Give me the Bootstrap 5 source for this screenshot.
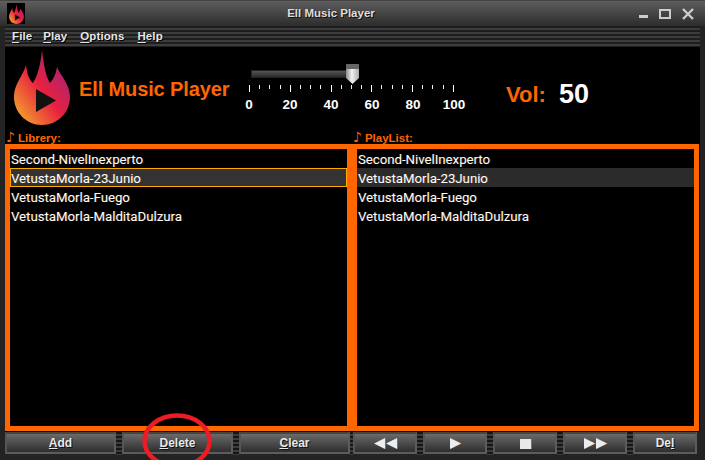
<!DOCTYPE html>
<html lang="en">
<head>
    <meta charset="UTF-8">
    <meta name="viewport" content="width=device-width, initial-scale=1.0">
    <title>Ell Music Player</title>
    <link href="https://cdn.jsdelivr.net/npm/bootstrap@5.3.0/dist/css/bootstrap.min.css" rel="stylesheet">
    <style>
        html, body { margin: 0; height: 460px; overflow: hidden; background: #fff; }
        .player-win { position: relative; width: 705px; height: 460px; overflow: hidden; background: #232323; font-family: "Liberation Sans", Arial, sans-serif; }
        .title-strip { height: 26px; background: linear-gradient(#5e5e5e, #2c2c2c); border-top: 1px solid #444; color: #ddd; font-size: 11.5px; font-weight: 700; text-shadow: 1px 1px 0 #111; }
        .title-icon { width: 18px; height: 21px; margin-left: 7px; background: #000; }
        .title-name { width: 612px; text-align: center; }
        .win-btns { gap: 11px; margin-left: 2px; }
        .menu-strip { height: 21px; margin: 0 5px; background: repeating-linear-gradient(#1d1d1d 0 2px, #3c3c3c 2px 4px); font-size: 11.5px; font-weight: 700; letter-spacing: .1px; }
        .menu-strip .nav-link { padding: 0; color: #e6e6e6; text-shadow: 1px 1px 0 #000; }
        .menu-strip u { text-underline-offset: 2px; }
        .player-body { margin: 0 5px; height: 385px; background: #000; }
        .head-row { height: 83px; }
        .logo-svg { width: 56px; height: 75px; margin: 3px 0 0 9px; }
        .app-name { color: #f60; font-size: 20px; font-weight: 700; letter-spacing: -.12px; margin: 27px 0 0 9px; width: 160px; white-space: nowrap; }
        .vol-box { width: 205px; margin: 17px 0 0 10px; position: relative; }
        .vol-track { width: 98px; height: 8px; margin-left: 2px; margin-top: 6px; background: linear-gradient(#555, #2a2a2a); border: 1px solid #222; }
        .vol-thumb { position: absolute; left: 97px; top: 0; width: 13px; height: 20px; }
        .tick-row { margin-top: 7px; height: 7px; }
        .tick-row span { display: block; width: 1px; height: 4px; background: #eee; }
        .tick-row span.big { height: 7px; background: #fff; }
        .num-row { margin-top: 3px; }
        .num-row span { width: 0; display: flex; justify-content: center; color: #fff; font-size: 13.5px; font-weight: 700; }
        .vol-word { color: #f60; font-size: 22px; font-weight: 700; margin: 31px 0 0 52px; }
        .vol-num { color: #fff; font-size: 27px; font-weight: 700; margin: 31px 0 0 13px; line-height: 1.2; }
        .label-row { height: 14px; color: #f60; font-size: 11.5px; font-weight: 700; line-height: 14px; }
        .label-row > div { width: 347px; padding-left: 1px; }
        .note-mark { font-family: "DejaVu Sans", sans-serif; font-size: 14px; font-weight: 700; line-height: 1; margin-right: 3px; }
        .song-box { width: 347px; height: 287px; border: 5px solid #f60; background: #000; }
        .song-box .list-group-item { height: 19px; padding: 0 0 0 1px; border: 0; border-radius: 0; background: transparent; color: #fff; font-family: Roboto, sans-serif; font-size: 13.2px; line-height: 21px; white-space: nowrap; text-shadow: 1px 0 0 rgba(190, 110, 50, .35); }
        .song-box .list-group-item.picked { background: #333; outline: 1px solid #fa0; outline-offset: -1px; }
        .song-box .list-group-item.hovered { background: #2b2b2b; }
        .btn-row { height: 24px; margin-left: 5px; }
        .btn-row .btn { height: 22px; padding: 1px 0 0; border: 2px solid #5c5c5c; border-top-color: #444; border-left-color: #555; border-radius: 0; background: linear-gradient(#6a6a6a, #2e2e2e); color: #e8e8e8; font-size: 12px; font-weight: 700; line-height: 17px; text-shadow: 1px 1px 0 #111; display: flex; align-items: center; justify-content: center; }
        .btn-row svg { filter: drop-shadow(1px 0 0 #b4611d); }
        .btn-wide { width: 111px; }
        .btn-small { width: 64px; }
        .grip-a { width: 6px; height: 23px; background: repeating-linear-gradient(#161616 0 2px, #3c3c3c 2px 4px); }
        .grip-b { width: 3px; height: 23px; background: repeating-linear-gradient(#161616 0 2px, #3c3c3c 2px 4px); }
        .ring-mark { position: absolute; left: 142px; top: 413px; width: 70px; height: 56px; }
    </style>
</head>
<body>
    <div class="player-win d-flex flex-column">
        <!-- Title bar -->
        <div class="title-strip d-flex align-items-center">
            <div class="title-icon d-flex justify-content-center align-items-center">
                <svg width="15" height="20" viewBox="14 50 56 75"><use href="#flame"/></svg>
            </div>
            <div class="title-name">Ell Music Player</div>
            <div class="win-btns d-flex align-items-center">
                <svg width="9" height="11" viewBox="0 0 9 11"><rect x="0" y="7" width="9" height="3" fill="#ccc"/></svg>
                <svg width="12" height="10" viewBox="0 0 12 10"><rect x="1" y="1" width="10" height="8" fill="none" stroke="#ccc" stroke-width="2"/></svg>
                <svg width="12" height="12" viewBox="0 0 12 12"><path d="M1 1 11 11M11 1 1 11" stroke="#ccc" stroke-width="2.4"/></svg>
            </div>
        </div>

        <!-- Menu -->
        <ul class="nav menu-strip align-items-center">
            <li class="nav-item" style="margin-left:7px"><a class="nav-link" href="#"><u>F</u>ile</a></li>
            <li class="nav-item" style="margin-left:11px"><a class="nav-link" href="#"><u>P</u>lay</a></li>
            <li class="nav-item" style="margin-left:13px"><a class="nav-link" href="#"><u>O</u>ptions</a></li>
            <li class="nav-item" style="margin-left:13px"><a class="nav-link" href="#"><u>H</u>elp</a></li>
        </ul>

        <div class="player-body">
            <div class="head-row d-flex">
                <svg class="logo-svg flex-shrink-0" viewBox="14 50 56 75">
                    <defs>
                        <linearGradient id="flameFill" x1="0.1" y1="0.95" x2="0.85" y2="0.2">
                            <stop offset="0" stop-color="#f2a52c"/>
                            <stop offset="0.55" stop-color="#e9203f"/>
                            <stop offset="1" stop-color="#a9256f"/>
                        </linearGradient>
                        <g id="flame">
                            <path fill="url(#flameFill)" d="M42 50C43.500 62 45 75 50 83 53 80 56 74 57 67 60 75 70 84 70 97 70 113 57 125 42 125 26 125 14 112 14 97 14 84 23 76 26 65 27 73 29 80 33 83 38 75 41 62 42 50Z"/>
                            <path fill="#111" d="M36 89 56 100.500 36 112Z"/>
                        </g>
                    </defs>
                    <use href="#flame"/>
                </svg>
                <div class="app-name">Ell Music Player</div>
                <div class="vol-box">
                    <div class="vol-track"></div>
                    <svg class="vol-thumb" viewBox="0 0 13 20">
                        <defs>
                            <linearGradient id="thumbFill" x1="0" x2="1" y1="0" y2="0">
                                <stop offset="0" stop-color="#8a8a8a"/>
                                <stop offset="0.45" stop-color="#f2f2f2"/>
                                <stop offset="1" stop-color="#aaa"/>
                            </linearGradient>
                        </defs>
                        <path fill="#666" d="M0 0H13V5H0Z"/>
                        <path fill="url(#thumbFill)" d="M0 5H13V14L6.500 20 0 14Z"/>
                    </svg>
                    <div class="tick-row d-flex justify-content-between">
                        <span class="big"></span><span></span><span></span><span></span><span class="big"></span><span></span><span></span><span></span><span class="big"></span><span></span><span></span><span></span><span class="big"></span><span></span><span></span><span></span><span class="big"></span><span></span><span></span><span></span><span class="big"></span>
                    </div>
                    <div class="num-row d-flex justify-content-between">
                        <span>0</span><span>20</span><span>40</span><span>60</span><span>80</span><span>100</span>
                    </div>
                </div>
                <div class="vol-word">Vol:</div>
                <div class="vol-num">50</div>
            </div>

            <div class="label-row d-flex">
                <div><span class="note-mark">♪</span>Librery:</div>
                <div><span class="note-mark">♪</span>PlayList:</div>
            </div>

            <div class="d-flex">
                <div class="song-box">
                    <div class="list-group">
                        <div class="list-group-item">Second-NivelInexperto</div>
                        <div class="list-group-item picked">VetustaMorla-23Junio</div>
                        <div class="list-group-item">VetustaMorla-Fuego</div>
                        <div class="list-group-item">VetustaMorla-MalditaDulzura</div>
                    </div>
                </div>
                <div class="song-box">
                    <div class="list-group">
                        <div class="list-group-item">Second-NivelInexperto</div>
                        <div class="list-group-item hovered">VetustaMorla-23Junio</div>
                        <div class="list-group-item">VetustaMorla-Fuego</div>
                        <div class="list-group-item">VetustaMorla-MalditaDulzura</div>
                    </div>
                </div>
            </div>
        </div>

        <!-- Bottom buttons -->
        <div class="btn-row d-flex">
            <button class="btn btn-wide" type="button"><span><u>A</u>dd</span></button>
            <div class="grip-a"></div>
            <button class="btn btn-wide" type="button"><span><u>D</u>elete</span></button>
            <div class="grip-a"></div>
            <button class="btn btn-wide" type="button"><span><u>C</u>lear</span></button>
            <div class="grip-b"></div>
            <button class="btn btn-small" type="button" aria-label="Previous">
                <svg width="23" height="11" viewBox="0 0 23 11"><path fill="#e8eef4" d="M11 0V11L0 5.500ZM23 0V11L12 5.500Z"/></svg>
            </button>
            <div class="grip-a"></div>
            <button class="btn btn-small" type="button" aria-label="Play">
                <svg width="11" height="11" viewBox="0 0 11 11"><path fill="#e8eef4" d="M0 0V11L11 5.500Z"/></svg>
            </button>
            <div class="grip-a"></div>
            <button class="btn btn-small" type="button" aria-label="Stop">
                <svg width="11" height="10" viewBox="0 0 11 10"><rect width="11" height="10" fill="#e8e8e8"/></svg>
            </button>
            <div class="grip-a"></div>
            <button class="btn btn-small" type="button" aria-label="Next">
                <svg width="23" height="11" viewBox="0 0 23 11"><path fill="#e8eef4" d="M0 0V11L11 5.500ZM12 0V11L23 5.500Z"/></svg>
            </button>
            <div class="grip-a"></div>
            <button class="btn btn-small" type="button"><span>De<u>l</u></span></button>
        </div>

        <!-- Red hand-drawn ring over the Delete button -->
        <svg class="ring-mark" viewBox="0 0 70 56"><ellipse cx="35" cy="28" rx="32.500" ry="25.500" fill="none" stroke="#ed1c24" stroke-width="4.500"/></svg>
    </div>

    <script src="https://cdn.jsdelivr.net/npm/bootstrap@5.3.0/dist/js/bootstrap.bundle.min.js"></script>
</body>
</html>
